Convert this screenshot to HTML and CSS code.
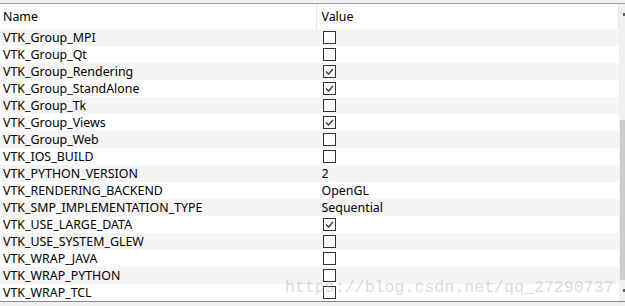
FILE: index.html
```html
<!DOCTYPE html>
<html>
<head>
<meta charset="utf-8">
<link rel="stylesheet" href="styles.css">
</head>
<body>
<div class="view">
  <div class="table">
    <div class="header">
      <div class="cell name">Name</div>
      <div class="cell value">Value</div>
    </div>
    <div class="row alt"><div class="cell name">VTK_Group_MPI</div><div class="cell value"><span class="cb"></span></div></div>
    <div class="row"><div class="cell name">VTK_Group_Qt</div><div class="cell value"><span class="cb"></span></div></div>
    <div class="row alt"><div class="cell name">VTK_Group_Rendering</div><div class="cell value"><span class="cb checked"><svg viewBox="0 0 13 13" width="13" height="13"><polyline points="3,6.5 5.5,9 10,4" /></svg></span></div></div>
    <div class="row"><div class="cell name">VTK_Group_StandAlone</div><div class="cell value"><span class="cb checked"><svg viewBox="0 0 13 13" width="13" height="13"><polyline points="3,6.5 5.5,9 10,4" /></svg></span></div></div>
    <div class="row alt"><div class="cell name">VTK_Group_Tk</div><div class="cell value"><span class="cb"></span></div></div>
    <div class="row"><div class="cell name">VTK_Group_Views</div><div class="cell value"><span class="cb checked"><svg viewBox="0 0 13 13" width="13" height="13"><polyline points="3,6.5 5.5,9 10,4" /></svg></span></div></div>
    <div class="row alt"><div class="cell name">VTK_Group_Web</div><div class="cell value"><span class="cb"></span></div></div>
    <div class="row"><div class="cell name">VTK_IOS_BUILD</div><div class="cell value"><span class="cb"></span></div></div>
    <div class="row alt"><div class="cell name">VTK_PYTHON_VERSION</div><div class="cell value">2</div></div>
    <div class="row"><div class="cell name">VTK_RENDERING_BACKEND</div><div class="cell value">OpenGL</div></div>
    <div class="row alt"><div class="cell name">VTK_SMP_IMPLEMENTATION_TYPE</div><div class="cell value">Sequential</div></div>
    <div class="row"><div class="cell name">VTK_USE_LARGE_DATA</div><div class="cell value"><span class="cb checked"><svg viewBox="0 0 13 13" width="13" height="13"><polyline points="3,6.5 5.5,9 10,4" /></svg></span></div></div>
    <div class="row alt"><div class="cell name">VTK_USE_SYSTEM_GLEW</div><div class="cell value"><span class="cb"></span></div></div>
    <div class="row"><div class="cell name">VTK_WRAP_JAVA</div><div class="cell value"><span class="cb"></span></div></div>
    <div class="row alt"><div class="cell name">VTK_WRAP_PYTHON</div><div class="cell value"><span class="cb"></span></div></div>
    <div class="row"><div class="cell name">VTK_WRAP_TCL</div><div class="cell value"><span class="cb"></span></div></div>
  </div>
  <div class="scrollbar">
    <div class="arrow"></div>
    <div class="track"><div class="thumb"></div></div>
    <div class="arrow"></div>
  </div>
  <div class="watermark">https://blog.csdn.net/qq_27290737</div>
</div>
</body>
</html>
```
FILE: styles.css
```css
html, body {
  margin: 0;
  padding: 0;
  background: #f0f0f0;
  width: 625px;
  height: 306px;
  overflow: hidden;
}
body {
  font-family: "Noto Sans", "Open Sans", sans-serif;
  font-size: 12.4px;
  color: #000;
}
.view {
  position: relative;
  margin-top: 3px;
  border-top: 1px solid #a0a0a0;
  border-bottom: 1px solid #828790;
  display: flex;
  background: #fff;
  height: 297px;
}
.table {
  width: 619px;
  display: flex;
  flex-direction: column;
}
.header {
  display: flex;
  height: 25px;
  background: #fff;
}
.header .cell {
  line-height: 25px;
}
.header .name {
  border-right: 1px solid #e5e5e5;
}
.header .value {
  border-right: 1px solid #e5e5e5;
}
.row {
  display: flex;
  height: 17px;
  background: #fff;
}
.row.alt {
  background: #f5f5f5;
}
.cell {
  line-height: 17px;
  white-space: nowrap;
  overflow: hidden;
}
.name {
  width: 314px;
  padding-left: 3px;
}
.value {
  width: 297px;
  padding-left: 4px;
  display: flex;
  align-items: center;
}
.row .value {
  width: 298px;
  padding-left: 4px;
  margin-left: 1px;
}
.cb {
  display: block;
  width: 11px;
  height: 11px;
  border: 1px solid #333;
  margin-left: 2px;
  background: #fff;
  position: relative;
}
.cb svg {
  position: absolute;
  left: -1px;
  top: -1px;
}
.cb polyline {
  fill: none;
  stroke: #333;
  stroke-width: 1.3;
}
.scrollbar {
  width: 6px;
  background: #f0f0f0;
  display: flex;
  flex-direction: column;
  align-items: flex-end;
}
.arrow {
  width: 2px;
  height: 3px;
  background: #606060;
  margin: 9px 0 9px 0;
}
.track {
  flex: 1;
  width: 6px;
  display: flex;
  flex-direction: column;
  justify-content: flex-end;
}
.thumb {
  width: 5px;
  margin-left: 1px;
  height: 160px;
  background: #cdcdcd;
}
.watermark {
  position: absolute;
  left: 285px;
  top: 274px;
  font-family: "Liberation Mono", monospace;
  font-size: 16.6px;
  color: rgba(175, 175, 175, 0.45);
  white-space: nowrap;
  pointer-events: none;
}
```
